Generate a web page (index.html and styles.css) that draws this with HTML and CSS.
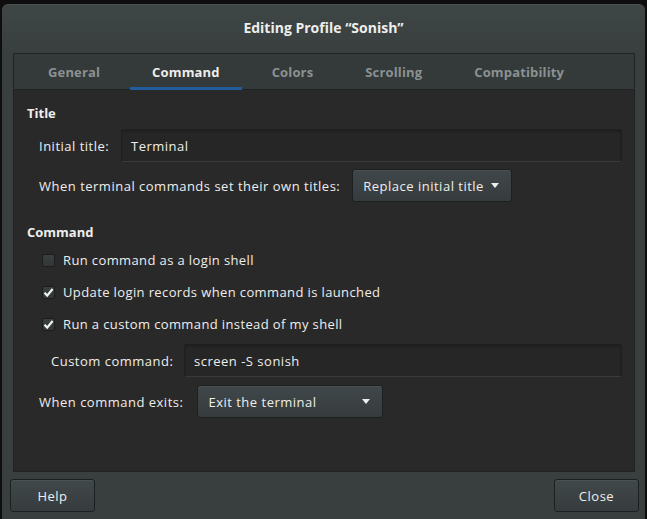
FILE: index.html
```html
<!DOCTYPE html>
<html>
<head>
<meta charset="utf-8">
<link rel="stylesheet" href="styles.css">
</head>
<body>
<div class="screen">
  <div class="window">
    <div class="titlebar">Editing Profile “Sonish”</div>
    <div class="notebook">
      <div class="tabs">
        <div class="tab">General</div>
        <div class="tab active">Command</div>
        <div class="tab">Colors</div>
        <div class="tab">Scrolling</div>
        <div class="tab">Compatibility</div>
      </div>
      <div class="page">
        <div class="heading h-title">Title</div>
        <div class="row r-entry">
          <span class="label l-initial">Initial title:</span>
          <div class="entry">Terminal</div>
        </div>
        <div class="row r-combo">
          <span class="label">When terminal commands set their own titles:</span>
          <div class="combo c-replace"><span>Replace initial title</span><span class="arrow"></span></div>
        </div>
        <div class="heading h-command">Command</div>
        <div class="check-row">
          <span class="check"></span><span class="label">Run command as a login shell</span>
        </div>
        <div class="check-row">
          <span class="check"><svg viewBox="0 0 13 13" width="13" height="13"><path d="M2.5 6.8 L5.2 9.6 L10.6 3" fill="none" stroke="#f2f2f2" stroke-width="2.2"/></svg></span><span class="label">Update login records when command is launched</span>
        </div>
        <div class="check-row">
          <span class="check"><svg viewBox="0 0 13 13" width="13" height="13"><path d="M2.5 6.8 L5.2 9.6 L10.6 3" fill="none" stroke="#f2f2f2" stroke-width="2.2"/></svg></span><span class="label">Run a custom command instead of my shell</span>
        </div>
        <div class="row r-custom">
          <span class="label l-custom">Custom command:</span>
          <div class="entry">screen -S sonish</div>
        </div>
        <div class="row r-exit">
          <span class="label">When command exits:</span>
          <div class="combo c-exit"><span>Exit the terminal</span><span class="arrow"></span></div>
        </div>
      </div>
    </div>
    <div class="footer">
      <div class="button b-help">Help</div>
      <div class="button b-close">Close</div>
    </div>
  </div>
</div>
</body>
</html>
```

FILE: styles.css
```css
html, body {
  margin: 0;
  padding: 0;
}
body {
  background: #101010;
  font-family: "Open Sans", "DejaVu Sans", sans-serif;
  font-size: 13px;
  color: #eeeeec;
}
.screen {
  width: 647px;
  height: 519px;
  box-sizing: border-box;
  padding: 4px 2px 0 2px;
  overflow: hidden;
  background: #0e0e0e;
}
.window {
  height: 515px;
  background: #393f3f;
  border-radius: 6px 6px 0 0;
  display: flex;
  flex-direction: column;
  border-top: 1px solid #4a5151;
  box-sizing: border-box;
}
.titlebar {
  height: 48px;
  flex: none;
  display: flex;
  align-items: center;
  justify-content: center;
  font-weight: 700;
  font-size: 14px;
  color: #eeeeec;
  padding-bottom: 4px;
  box-sizing: border-box;
  background: linear-gradient(#3f4646, #393f3f);
  border-radius: 6px 6px 0 0;
}
.notebook {
  margin: 0 10px 0 11px;
  height: 419px;
  flex: none;
  border: 1px solid #1f2323;
  box-sizing: border-box;
  display: flex;
  flex-direction: column;
  background: #292929;
}
.tabs {
  height: 36px;
  flex: none;
  display: flex;
  background: #343939;
  border-bottom: 1px solid #1f2323;
  padding-left: 8px;
  box-sizing: border-box;
}
.tab {
  padding: 0 26px;
  display: flex;
  align-items: center;
  font-weight: 700;
  color: #8b9192;
  position: relative;
  letter-spacing: 0.15px;
}
.tab.active {
  color: #eeeeec;
}
.tab.active::after {
  content: "";
  position: absolute;
  left: 4px;
  right: 4px;
  bottom: -1px;
  height: 3px;
  background: #215d9c;
}
.page {
  flex: 1;
  padding: 13px 12px 0 13px;
  background: #292929;
}
.heading {
  font-weight: 700;
  height: 20px;
  line-height: 20px;
}
.row {
  display: flex;
  align-items: center;
  height: 33px;
  padding-left: 12px;
}
.r-entry { margin-top: 6px; }
.r-combo { margin-top: 7px; }
.h-command { margin-top: 20px; }
.r-custom { margin-top: 4px; padding-left: 24px; }
.r-exit { margin-top: 8px; }
.label {
  color: #eeeeec;
  white-space: nowrap;
  letter-spacing: 0.5px;
}
.check-row .label { letter-spacing: 0.38px; }
.l-initial { width: 82px; flex: none; }
.l-custom { width: 133px; flex: none; }
.entry {
  flex: 1;
  height: 33px;
  box-sizing: border-box;
  background: #262626;
  border: 1px solid #1e1e1e;
  border-bottom-color: #3a3a3a;
  border-radius: 3px;
  padding-left: 9px;
  display: flex;
  align-items: center;
  color: #eeeeec;
  letter-spacing: 0.5px;
  box-shadow: inset 0 2px 2px rgba(0,0,0,0.15);
}
.combo {
  height: 33px;
  box-sizing: border-box;
  background: linear-gradient(#40474a, #363c3d);
  border: 1px solid #1c2020;
  border-radius: 3px;
  display: flex;
  align-items: center;
  justify-content: space-between;
  padding: 0 12px 0 10px;
  color: #eeeeec;
  letter-spacing: 0.5px;
  box-shadow: inset 0 1px 0 rgba(255,255,255,0.06);
}
.c-replace { width: 160px; margin-left: 12px; }
.c-exit { width: 186px; margin-left: 14px; }
.arrow {
  width: 0;
  height: 0;
  border-left: 4.5px solid transparent;
  border-right: 4.5px solid transparent;
  border-top: 5px solid #eeeeec;
}
.check-row {
  height: 32px;
  display: flex;
  align-items: center;
  padding-left: 15px;
}
.h-command + .check-row { margin-top: 2px; }
.check {
  width: 13px;
  height: 13px;
  flex: none;
  box-sizing: border-box;
  background: linear-gradient(#3b3f40, #323637);
  border: 1px solid #1b1e1e;
  border-radius: 2px;
  margin-right: 8px;
  position: relative;
}
.check svg {
  position: absolute;
  left: -1px;
  top: -1px;
}
.footer {
  flex: 1;
  display: flex;
  justify-content: space-between;
  padding: 7px 6px 0 8px;
}
.button {
  width: 85px;
  height: 33px;
  box-sizing: border-box;
  background: linear-gradient(#41484a, #363c3d);
  border: 1px solid #1c2020;
  border-radius: 3px;
  display: flex;
  align-items: center;
  justify-content: center;
  color: #eeeeec;
  letter-spacing: 0.5px;
  box-shadow: inset 0 1px 0 rgba(255,255,255,0.06);
}
```
